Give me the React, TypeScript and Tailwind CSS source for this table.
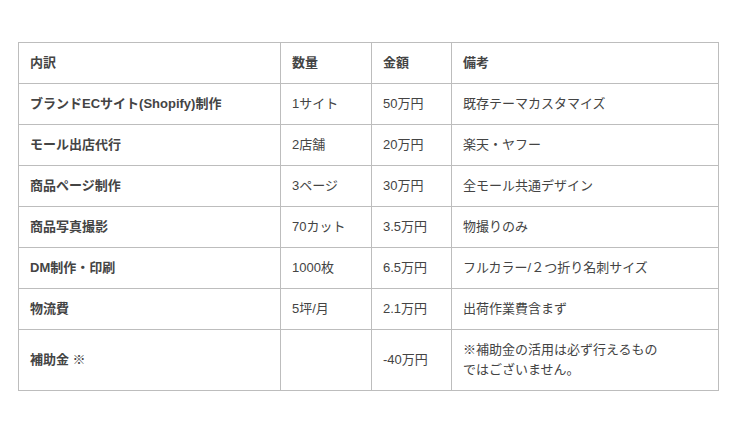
const ROWS = [
  { item: "ブランドECサイト(Shopify)制作", qty: "1サイト", price: "50万円", note: "既存テーマカスタマイズ" },
  { item: "モール出店代行", qty: "2店舗", price: "20万円", note: "楽天・ヤフー" },
  { item: "商品ページ制作", qty: "3ページ", price: "30万円", note: "全モール共通デザイン" },
  { item: "商品写真撮影", qty: "70カット", price: "3.5万円", note: "物撮りのみ" },
  { item: "DM制作・印刷", qty: "1000枚", price: "6.5万円", note: "フルカラー/２つ折り名刺サイズ" },
  { item: "物流費", qty: "5坪/月", price: "2.1万円", note: "出荷作業費含まず" },
];

const cell = "border border-[#bdbdbd] px-[11px] py-[10px] text-left align-middle";

export default function App() {
  return (
    <div
      className="w-[740px] h-[431px] bg-white pt-[42px] pl-[18px] text-[13px] leading-[20px] text-[#444]"
      style={{ fontFamily: '"Liberation Sans", "Noto Sans CJK JP", sans-serif' }}
    >
      <table className="w-[700px] table-fixed border-collapse">
        <colgroup>
          <col className="w-[262px]" />
          <col className="w-[91px]" />
          <col className="w-[80px]" />
          <col className="w-[267px]" />
        </colgroup>
        <thead>
          <tr>
            <th className={`${cell} font-bold`}>内訳</th>
            <th className={`${cell} font-bold`}>数量</th>
            <th className={`${cell} font-bold`}>金額</th>
            <th className={`${cell} font-bold`}>備考</th>
          </tr>
        </thead>
        <tbody>
          {ROWS.map((r, i) => (
            <tr key={i}>
              <td className={`${cell} font-bold`}>{r.item}</td>
              <td className={cell}>{r.qty}</td>
              <td className={cell}>{r.price}</td>
              <td className={cell}>{r.note}</td>
            </tr>
          ))}
          <tr>
            <td className={`${cell} font-bold`}>補助金 ※</td>
            <td className={cell}></td>
            <td className={cell}>-40万円</td>
            <td className={cell}>
              ※補助金の活用は必ず行えるもの
              <br />
              ではございません。
            </td>
          </tr>
        </tbody>
      </table>
    </div>
  );
}
